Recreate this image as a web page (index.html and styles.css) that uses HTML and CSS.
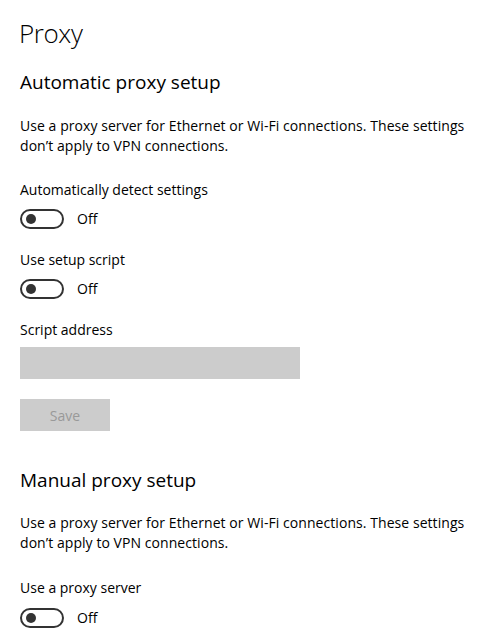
FILE: index.html
```html
<!DOCTYPE html>
<html lang="en">
<head>
<meta charset="utf-8">
<title>Proxy</title>
<link rel="stylesheet" href="styles.css">
</head>
<body>
<main class="page">
  <h1 class="title">Proxy</h1>

  <section class="section auto">
    <h2 class="heading">Automatic proxy setup</h2>
    <p class="desc">Use a proxy server for Ethernet or Wi-Fi connections. These settings don’t apply to VPN connections.</p>

    <div class="setting first">
      <div class="label">Automatically detect settings</div>
      <div class="toggle-row">
        <span class="toggle"><span class="knob"></span></span>
        <span class="state">Off</span>
      </div>
    </div>

    <div class="setting second">
      <div class="label">Use setup script</div>
      <div class="toggle-row">
        <span class="toggle"><span class="knob"></span></span>
        <span class="state">Off</span>
      </div>
    </div>

    <div class="setting field">
      <div class="label">Script address</div>
      <div class="input"></div>
    </div>

    <button class="btn" type="button" disabled>Save</button>
  </section>

  <section class="section manual">
    <h2 class="heading">Manual proxy setup</h2>
    <p class="desc">Use a proxy server for Ethernet or Wi-Fi connections. These settings don’t apply to VPN connections.</p>

    <div class="setting first">
      <div class="label">Use a proxy server</div>
      <div class="toggle-row">
        <span class="toggle"><span class="knob"></span></span>
        <span class="state">Off</span>
      </div>
    </div>
  </section>
</main>
</body>
</html>
```
FILE: styles.css
```css
html, body {
  margin: 0;
  padding: 0;
  background: #ffffff;
}
body {
  font-family: "Open Sans", "Noto Sans", sans-serif;
  color: #000000;
  font-size: 14px;
}
.page {
  padding: 13px 20px 0 19px;
  display: flex;
  flex-direction: column;
}
.title {
  margin: 0;
  font-size: 26px;
  font-weight: 300;
  line-height: 40px;
  letter-spacing: -0.4px;
}
.section {
  display: flex;
  flex-direction: column;
  padding-left: 1px;
}
.heading {
  margin: 15px 0 0 0;
  font-size: 19px;
  font-weight: 400;
  line-height: 28px;
}
.manual .heading {
  margin-top: 35px;
}
.desc {
  margin: 20px 0 0 0;
  line-height: 20px;
  max-width: 455px;
  letter-spacing: 0.06px;
}
.manual .desc {
  margin-top: 19px;
}
.setting {
  display: flex;
  flex-direction: column;
}
.auto .first {
  margin-top: 24px;
}
.auto .second {
  margin-top: 21px;
}
.manual .first {
  margin-top: 25px;
}
.setting.field {
  margin-top: 21px;
}
.label {
  line-height: 20px;
}
.toggle-row {
  margin-top: 9px;
  display: flex;
  align-items: center;
  gap: 13px;
  height: 20px;
}
.manual .toggle-row {
  margin-top: 10px;
}
.toggle {
  box-sizing: border-box;
  width: 44px;
  height: 20px;
  border: 2px solid #333333;
  border-radius: 10px;
  display: flex;
  align-items: center;
  padding-left: 4px;
}
.knob {
  width: 10px;
  height: 10px;
  border-radius: 50%;
  background: #333333;
}
.state {
  line-height: 20px;
}
.input {
  margin-top: 7px;
  width: 280px;
  height: 32px;
  background: #cccccc;
}
.btn {
  margin-top: 20px;
  align-self: flex-start;
  width: 90px;
  height: 32px;
  border: none;
  padding: 0;
  background: #cccccc;
  color: #999999;
  font-family: inherit;
  font-size: 14px;
}
```
